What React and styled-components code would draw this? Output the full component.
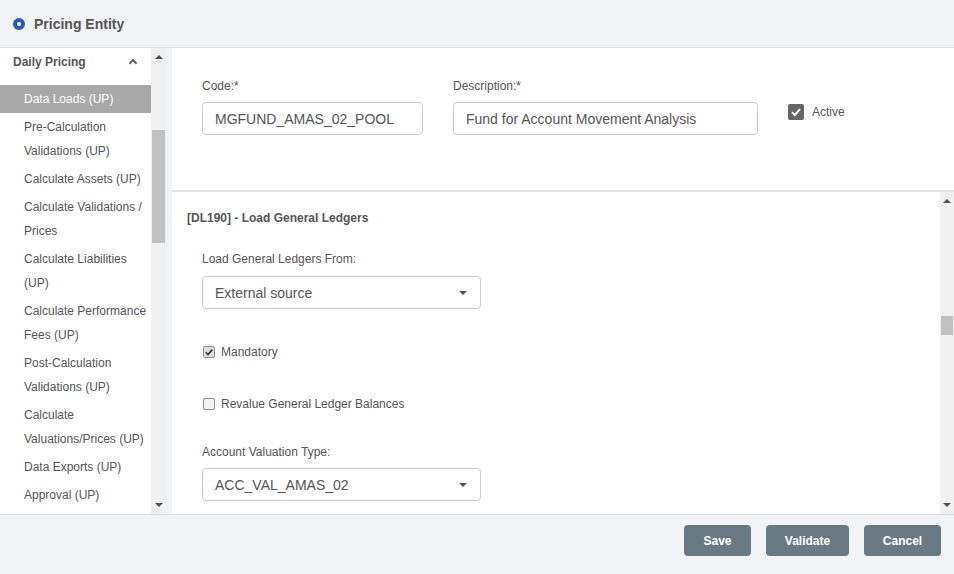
import React from 'react';
import styled, { createGlobalStyle } from 'styled-components';

const GlobalStyle = createGlobalStyle`
  html, body {
    margin: 0;
    padding: 0;
    font-family: "Liberation Sans", Arial, sans-serif;
    color: #555;
  }
  * { box-sizing: border-box; }
`;

const Page = styled.div`
  width: 954px;
  height: 574px;
  display: flex;
  flex-direction: column;
  background: #f2f3f5;
  overflow: hidden;
`;

const Header = styled.div`
  height: 48px;
  flex: none;
  display: flex;
  align-items: center;
  gap: 9px;
  padding: 1px 13px 0;
  border-bottom: 1px solid #dcdde0;
  font-size: 14px;
  font-weight: bold;
  color: #555;
`;

const Radio = styled.span`
  width: 12px;
  height: 12px;
  border-radius: 50%;
  background: #2a5cb8;
  display: flex;
  align-items: center;
  justify-content: center;
  &::after {
    content: '';
    width: 4px;
    height: 4px;
    border-radius: 50%;
    background: #fff;
  }
`;

const Body = styled.div`
  flex: 1;
  display: flex;
  min-height: 0;
`;

const Sidebar = styled.div`
  width: 166px;
  flex: none;
  display: flex;
  background: #fff;
`;

const NavList = styled.div`
  width: 151px;
  overflow: hidden;
  font-size: 12px;
`;

const GroupTitle = styled.div`
  display: flex;
  justify-content: space-between;
  align-items: center;
  height: 37px;
  padding: 0 13px 10px;
  font-weight: bold;
  color: #555;
`;

const Chevron = styled.span`
  width: 6px;
  height: 6px;
  border-left: 2px solid #666;
  border-top: 2px solid #666;
  transform: rotate(45deg);
  margin-top: 3px;
  margin-right: 2px;
`;

const NavItem = styled.div`
  padding: 2px 4px 2px 24px;
  line-height: 24px;
  color: ${(p) => (p.active ? '#fff' : '#555')};
  background: ${(p) => (p.active ? '#a9a9a9' : 'transparent')};
`;

const Scrollbar = styled.div`
  width: ${(p) => p.w}px;
  flex: none;
  background: #f1f1f1;
  position: relative;
  display: flex;
  flex-direction: column;
  justify-content: space-between;
  align-items: center;
  padding: 7px 0;
`;

const Arrow = styled.span`
  width: 0;
  height: 0;
  border-left: 4px solid transparent;
  border-right: 4px solid transparent;
  ${(p) => (p.down ? 'border-top: 4px solid #505050;' : 'border-bottom: 4px solid #505050;')}
`;

const Thumb = styled.span`
  position: absolute;
  left: 1px;
  right: 1px;
  background: #c1c1c1;
`;

const Main = styled.div`
  flex: 1;
  margin-left: 6px;
  display: flex;
  flex-direction: column;
  min-width: 0;
`;

const TopPanel = styled.div`
  height: 144px;
  flex: none;
  background: #fff;
  border-bottom: 2px solid #e2e2e2;
  display: flex;
  align-items: flex-start;
  padding: 31px 30px 0;
  gap: 30px;
`;

const Field = styled.div`
  display: flex;
  flex-direction: column;
  width: ${(p) => p.w}px;
`;

const Label = styled.div`
  font-size: 12px;
  color: #555;
  margin-bottom: ${(p) => p.mb || 9}px;
`;

const Input = styled.div`
  height: 33px;
  border: 1px solid #ccc;
  border-radius: 4px;
  padding: 0 12px;
  display: flex;
  align-items: center;
  justify-content: space-between;
  font-size: 14px;
  color: #555;
  background: #fff;
`;

const Caret = styled.span`
  width: 0;
  height: 0;
  border-left: 4px solid transparent;
  border-right: 4px solid transparent;
  border-top: 4px solid #555;
  margin-right: 1px;
`;

const ActiveBox = styled.div`
  display: flex;
  align-items: center;
  gap: 8px;
  margin-top: 25px;
  font-size: 12px;
`;

const BigCheck = styled.span`
  width: 16px;
  height: 16px;
  border-radius: 2px;
  background: #666;
  display: flex;
  align-items: center;
  justify-content: center;
`;

const LowerPanel = styled.div`
  flex: 1;
  display: flex;
  background: #fff;
  min-height: 0;
`;

const Section = styled.div`
  flex: 1;
  padding: 19px 15px 0;
  overflow: hidden;
`;

const SectionTitle = styled.div`
  font-size: 12px;
  font-weight: bold;
  color: #555;
  margin-bottom: 27px;
`;

const Block = styled.div`
  padding-left: 15px;
  margin-bottom: ${(p) => p.mb || 0}px;
`;

const CheckRow = styled.label`
  display: flex;
  align-items: center;
  gap: 6px;
  font-size: 12px;
  color: #555;
  height: 16px;
`;

const SmallCheck = styled.span`
  width: 12px;
  height: 12px;
  border: 1px solid #8f8f8f;
  border-radius: 2px;
  background: ${(p) => (p.checked ? '#dcdcdc' : '#f3f3f3')};
  display: flex;
  align-items: center;
  justify-content: center;
  margin-left: 1px;
`;

const Footer = styled.div`
  height: 60px;
  flex: none;
  border-top: 1px solid #dcdde0;
  display: flex;
  justify-content: flex-end;
  align-items: flex-start;
  gap: 15px;
  padding: 10px 13px 0;
`;

const Button = styled.button`
  height: 31px;
  width: ${(p) => p.w}px;
  border: none;
  border-radius: 4px;
  background: #6a7a85;
  color: #fff;
  font-family: inherit;
  font-size: 12px;
  font-weight: bold;
`;

const navItems = [
  ['Pre-Calculation', 'Validations (UP)'],
  ['Calculate Assets (UP)'],
  ['Calculate Validations /', 'Prices'],
  ['Calculate Liabilities', '(UP)'],
  ['Calculate Performance', 'Fees (UP)'],
  ['Post-Calculation', 'Validations (UP)'],
  ['Calculate', 'Valuations/Prices (UP)'],
  ['Data Exports (UP)'],
  ['Approval (UP)'],
];

const Tick = ({ size, color, width }) => (
  <svg width={size} height={size} viewBox="0 0 12 12">
    <path d="M2 6.3 L4.8 9 L10 3.2" fill="none" stroke={color} strokeWidth={width} />
  </svg>
);

export default function App() {
  return (
    <Page>
      <GlobalStyle />
      <Header>
        <Radio />
        Pricing Entity
      </Header>
      <Body>
        <Sidebar>
          <NavList>
            <GroupTitle>
              Daily Pricing
              <Chevron />
            </GroupTitle>
            <NavItem active>Data Loads (UP)</NavItem>
            {navItems.map((lines) => (
              <NavItem key={lines.join(' ')}>
                {lines.map((l) => (
                  <div key={l}>{l}</div>
                ))}
              </NavItem>
            ))}
          </NavList>
          <Scrollbar w={15}>
            <Arrow />
            <Thumb style={{ top: 82, height: 113 }} />
            <Arrow down />
          </Scrollbar>
        </Sidebar>
        <Main>
          <TopPanel>
            <Field w={221}>
              <Label>Code:*</Label>
              <Input>MGFUND_AMAS_02_POOL</Input>
            </Field>
            <Field w={305}>
              <Label>Description:*</Label>
              <Input>Fund for Account Movement Analysis</Input>
            </Field>
            <ActiveBox>
              <BigCheck>
                <Tick size={12} color="#fff" width={2} />
              </BigCheck>
              Active
            </ActiveBox>
          </TopPanel>
          <LowerPanel>
            <Section>
              <SectionTitle>[DL190] - Load General Ledgers</SectionTitle>
              <Block mb={35}>
                <Label mb={10}>Load General Ledgers From:</Label>
                <Field w={279}>
                  <Input>
                    External source
                    <Caret />
                  </Input>
                </Field>
              </Block>
              <Block mb={36}>
                <CheckRow>
                  <SmallCheck checked>
                    <Tick size={10} color="#333" width={2} />
                  </SmallCheck>
                  Mandatory
                </CheckRow>
              </Block>
              <Block mb={33}>
                <CheckRow>
                  <SmallCheck />
                  Revalue General Ledger Balances
                </CheckRow>
              </Block>
              <Block>
                <Label mb={9}>Account Valuation Type:</Label>
                <Field w={279}>
                  <Input>
                    ACC_VAL_AMAS_02
                    <Caret />
                  </Input>
                </Field>
              </Block>
            </Section>
            <Scrollbar w={14}>
              <Arrow />
              <Thumb style={{ top: 124, height: 19 }} />
              <Arrow down />
            </Scrollbar>
          </LowerPanel>
        </Main>
      </Body>
      <Footer>
        <Button w={67}>Save</Button>
        <Button w={83}>Validate</Button>
        <Button w={77}>Cancel</Button>
      </Footer>
    </Page>
  );
}
